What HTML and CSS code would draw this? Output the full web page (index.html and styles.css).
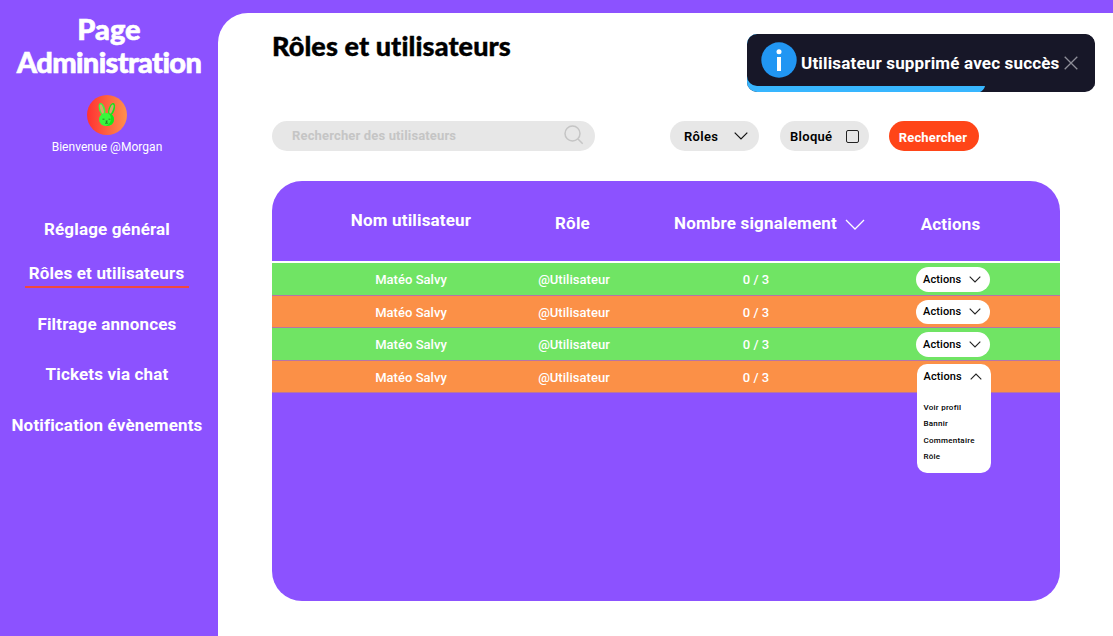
FILE: index.html
```html
<!DOCTYPE html>
<html lang="fr">
<head>
<meta charset="utf-8">
<title>Page Administration</title>
<link rel="stylesheet" href="styles.css">
</head>
<body>
<div class="app">
  <aside class="sidebar">
    <h1 class="brand"><span class="brand-top">Page</span><span class="brand-bottom">Administration</span></h1>
    <svg class="avatar" viewBox="0 0 40 40">
      <defs><linearGradient id="sunset"><stop offset="0" stop-color="#ff3131"/><stop offset="1" stop-color="#ff914d"/></linearGradient></defs>
      <circle cx="20" cy="20" r="20" fill="url(#sunset)"/>
      <g fill="#37f83d">
        <ellipse cx="15" cy="14.200" rx="3" ry="6.500" transform="rotate(-16 15 14.200)"/>
        <ellipse cx="24.600" cy="14.200" rx="3" ry="6.500" transform="rotate(18 24.600 14.200)" fill="#14e619"/>
        <ellipse cx="19.500" cy="24.500" rx="7.500" ry="6.600"/>
      </g>
      <path d="M21 18q6 1 6 6.500q0 6-8 6.600q5-3 5-7q0-4-3-6.100z" fill="#14e619"/>
      <ellipse cx="14.800" cy="14" rx="1.500" ry="4.800" transform="rotate(-16 14.800 14)" fill="#d8a56c"/>
      <ellipse cx="24.500" cy="14" rx="1.500" ry="4.800" transform="rotate(18 24.500 14)" fill="#d8a56c"/>
      <path d="M15.500 24.200h2M21.500 24.200h2M18.600 26h2M19.600 26v2M18 28.200h3.200" stroke="#22672a" stroke-width=".8" fill="none"/>
    </svg>
    <p class="welcome">Bienvenue @Morgan</p>
    <nav class="menu">
      <a class="menu-item general">Réglage général</a>
      <a class="menu-item active">Rôles et utilisateurs</a>
      <a class="menu-item ads">Filtrage annonces</a>
      <a class="menu-item tickets">Tickets via chat</a>
      <a class="menu-item events">Notification évènements</a>
    </nav>
  </aside>
  <main class="content">
    <h2 class="title">Rôles et utilisateurs</h2>
    <div class="filters">
      <div class="search">
        <span class="search-text">Rechercher des utilisateurs</span>
        <svg class="search-icon" viewBox="0 0 20 20"><circle cx="8.500" cy="8.500" r="7.500"/><path d="M14 14l4.700 4.700"/></svg>
      </div>
      <div class="chip roles"><span>Rôles</span><svg class="chip-chevron" viewBox="0 0 14 8"><path d="M.7.700L7 7 13.300.700"/></svg></div>
      <div class="chip blocked"><span>Bloqué</span><span class="checkbox"></span></div>
      <div class="submit">Rechercher</div>
    </div>
    <section class="table">
      <div class="head">
        <div class="th name">Nom utilisateur</div>
        <div class="th role">Rôle</div>
        <div class="th reports"><span>Nombre signalement</span><svg class="sort" viewBox="0 0 20 11"><path d="M1 1l9 9 9-9"/></svg></div>
        <div class="th act">Actions</div>
      </div>
      <div class="row green">
        <span>Matéo Salvy</span><span class="td-role">@Utilisateur</span><span>0 / 3</span>
        <div class="pill"><span>Actions</span><svg class="chevron" viewBox="0 0 12 7"><path d="M.7.700L6 6 11.300.700"/></svg></div>
      </div>
      <div class="row orange short">
        <span>Matéo Salvy</span><span class="td-role">@Utilisateur</span><span>0 / 3</span>
        <div class="pill"><span>Actions</span><svg class="chevron" viewBox="0 0 12 7"><path d="M.7.700L6 6 11.300.700"/></svg></div>
      </div>
      <div class="row green">
        <span>Matéo Salvy</span><span class="td-role">@Utilisateur</span><span>0 / 3</span>
        <div class="pill"><span>Actions</span><svg class="chevron" viewBox="0 0 12 7"><path d="M.7.700L6 6 11.300.700"/></svg></div>
      </div>
      <div class="row orange short">
        <span>Matéo Salvy</span><span class="td-role">@Utilisateur</span><span>0 / 3</span>
        <div class="dropdown">
          <div class="dropdown-head"><span>Actions</span><svg class="chevron" viewBox="0 0 12 7"><path d="M.7 6.300L6 1l5.300 5.300"/></svg></div>
          <ul class="options"><li>Voir profil</li><li>Bannir</li><li>Commentaire</li><li>Rôle</li></ul>
        </div>
      </div>
    </section>
  </main>
</div>
<div class="toast">
  <svg class="progress" viewBox="0 0 348 58"><path d="M0 0H238V52Q237 56 233 58H0z" fill="#38b6ff"/></svg>
  <div class="toast-body">
    <svg class="info" viewBox="0 0 36 36"><circle cx="18" cy="18" r="17.700" fill="#2196f3"/><circle cx="18" cy="9.700" r="2.500" fill="#fff"/><path d="M16 15h4v14h-4z" fill="#fff"/></svg>
    <span class="toast-text">Utilisateur supprimé avec succès</span>
    <svg class="close" viewBox="0 0 14 14"><path d="M.7.700l12.600 12.600M13.300.700L.7 13.300"/></svg>
  </div>
</div>
</body>
</html>
```
FILE: styles.css
```css
* { box-sizing: border-box; }
body { margin: 0; font-family: Roboto, sans-serif; background: #8c52ff; overflow: hidden; }
.app { display: flex; height: 636px; }
.sidebar { width: 218px; flex: none; display: flex; flex-direction: column; align-items: center; color: #fff; }
.brand { margin: 12px 0 0; display: flex; flex-direction: column; align-items: center; font: 900 29px/33px Lato, sans-serif; white-space: nowrap; font-variant-ligatures: none; -webkit-text-stroke: .6px #fff; }
.brand-bottom { letter-spacing: -.65px; }
.avatar { width: 40px; height: 40px; margin: 17px 4px 0 0; }
.welcome { margin: 4px 4px 0 0; font-size: 12px; line-height: 16px; letter-spacing: .04px; }
.menu { display: flex; flex-direction: column; align-items: center; margin-top: 63px; margin-right: 4px; font-size: 17px; font-weight: 700; line-height: 22px; letter-spacing: .16px; white-space: nowrap; }
.menu-item { height: 22px; }
.active { margin-top: 22px; height: 26px; padding: 0 5px 0 4px; border-bottom: 2px solid #f0483e; }
.ads { margin-top: 25px; }
.tickets { margin-top: 28px; }
.events { margin-top: 29px; }
.content { flex: 1; margin-top: 13px; padding: 0 53px 0 54px; background: #fff; border-top-left-radius: 30px; }
.title { margin: 16px 0 0; font: 900 27px/34px Lato, sans-serif; letter-spacing: .1px; color: #000; white-space: nowrap; font-variant-ligatures: none; -webkit-text-stroke: .4px #000; }
.filters { display: flex; align-items: center; margin-top: 58px; height: 30px; font-size: 13px; font-weight: 700; letter-spacing: .15px; }
.search { display: flex; align-items: center; justify-content: space-between; width: 323px; height: 30px; padding: 0 11px 2px 20px; background: #e7e7e7; border-radius: 15px; color: #c5c5c5; }
.search-icon { width: 20px; height: 20px; fill: none; stroke: #c5c5c5; stroke-width: 1.500; }
.chip { display: flex; align-items: center; justify-content: space-between; height: 30px; border-radius: 15px; background: #e7e7e7; color: #000; font-weight: 600; letter-spacing: .3px; }
.roles { width: 89px; margin-left: 75px; padding: 0 11px 0 14px; }
.chip-chevron { width: 14px; height: 8px; fill: none; stroke: #111; stroke-width: 1.200; }
.blocked { width: 89px; margin-left: 21px; padding: 0 10px 0 10px; }
.checkbox { width: 13px; height: 13px; border: 1px solid #222; border-radius: 2px; }
.submit { width: 90px; height: 30px; margin-left: 20px; border-radius: 15px; background: #ff4518; color: #fff; text-align: center; line-height: 33px; padding-right: 2px; }
.table { width: 787.500px; height: 420px; margin-top: 30px; background: #8c52ff; border-radius: 30px; color: #fff; }
.head, .row { display: grid; grid-template-columns: 168px 156px 210px 184px; padding-left: 55px; justify-items: center; }
.head { height: 82px; border-bottom: 2px solid #fff; font-size: 17px; font-weight: 700; line-height: 20px; letter-spacing: .17px; white-space: nowrap; }
.name { margin-top: 29px; }
.role { margin-top: 32px; margin-right: 1px; }
.reports { margin-top: 32px; justify-self: start; padding-left: 23px; display: flex; gap: 8px; }
.act { margin-top: 33px; margin-right: 5px; }
.sort { width: 20px; height: 11px; margin-top: 6px; fill: none; stroke: #fff; stroke-width: 1.300; flex: none; }
.row { height: 33px; grid-template-rows: 32px; align-items: center; border-bottom: 1px solid #b774a5; font-size: 13px; font-weight: 500; letter-spacing: .04px; }
.short { height: 32px; grid-template-rows: 33px; }
.green { background: #70e464; }
.orange { background: #fb9047; }
.td-role { padding-left: 2px; }
.pill, .dropdown { width: 74px; background: #fff; color: #000; font-size: 11px; letter-spacing: .12px; }
.pill { display: flex; align-items: center; justify-content: space-between; height: 25px; border-radius: 13px; padding: 0 9px 0 7px; }
.short .pill { height: 24.500px; align-self: start; margin-top: 3.500px; }
.dropdown { align-self: start; height: 109px; margin: 3px 0 0 1px; border-radius: 10px; }
.dropdown-head { display: flex; align-items: center; justify-content: space-between; height: 25px; padding: 0 9px 0 7px; }
.chevron { width: 12px; height: 7px; fill: none; stroke: #222; stroke-width: 1.100; }
.options { list-style: none; margin: 11px 0 0; padding: 0 7px; font-size: 8px; line-height: 16.400px; letter-spacing: .25px; }
.toast { position: absolute; left: 747px; top: 34px; width: 348px; height: 58px; border-radius: 10px; overflow: hidden; background: #171728; }
.progress { position: absolute; inset: 0; width: 348px; height: 58px; }
.toast-body { position: relative; display: flex; align-items: center; height: 52px; padding-left: 14px; background: #171728; border-radius: 10px 10px 0 10px; color: #fff; }
.info { width: 36px; height: 36px; flex: none; }
.toast-text { margin: 6px 0 0 4px; font-size: 17px; font-weight: 700; letter-spacing: .17px; white-space: nowrap; }
.close { width: 14px; height: 14px; margin: 6px 0 0 5px; flex: none; fill: none; stroke: #8e8e98; stroke-width: 1.300; }
```
